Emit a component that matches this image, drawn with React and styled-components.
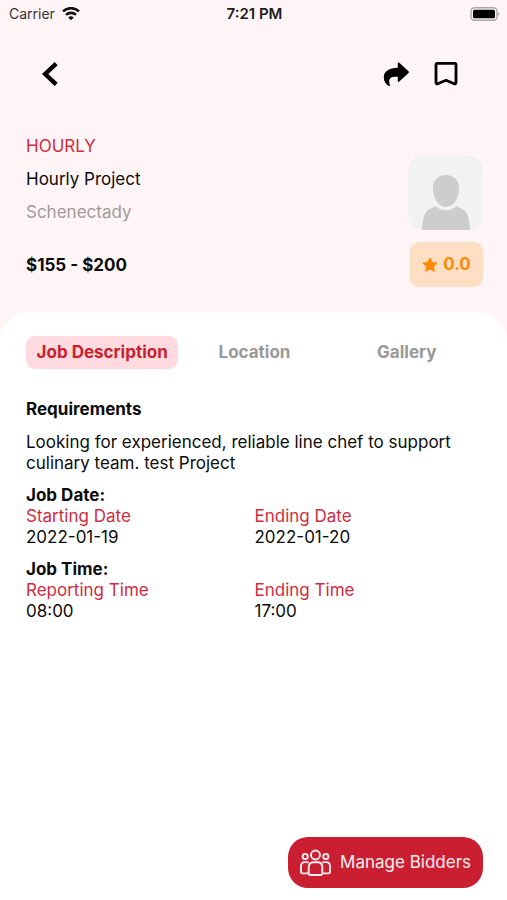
import React, { useState } from 'react';
import styled, { createGlobalStyle } from 'styled-components';

const GlobalStyle = createGlobalStyle`
  * {
    box-sizing: border-box;
  }

  body {
    margin: 0;
    background: #fff;
    color: #0c0c0c;
    font-family: Inter, 'Liberation Sans', sans-serif;
    font-size: 17px;
    line-height: 21px;
  }

  button {
    border: 0;
    padding: 0;
    background: none;
    color: inherit;
    font: inherit;
    cursor: pointer;
  }
`;

const Screen = styled.div`
  display: flex;
  flex-direction: column;
  min-height: 100vh;
  background: #fff5f6;
`;

const StatusBar = styled.div`
  display: grid;
  grid-template-columns: 1fr auto 1fr;
  align-items: center;
  height: 27px;
  padding: 0 7px 0 9px;
  font-size: 14px;
`;

const Carrier = styled.div`
  display: flex;
  align-items: center;
  gap: 7px;
  color: #333;
`;

const Clock = styled.div`
  color: #1c1c1c;
  font-size: 15px;
  font-weight: 600;
`;

const Battery = styled.svg`
  justify-self: end;
`;

const NavBar = styled.nav`
  display: flex;
  align-items: center;
  justify-content: space-between;
  padding: 33px 48px 0 40px;
`;

const NavActions = styled.div`
  display: flex;
  gap: 23px;
`;

const IconButton = styled.button`
  display: flex;
  color: #000;
`;

const Header = styled.header`
  display: flex;
  justify-content: space-between;
  padding: 48px 24px 25px 26px;
`;

const Summary = styled.div`
  display: flex;
  flex-direction: column;
  gap: 12px;
`;

const Line = styled.div`
  color: ${props => props.$color || 'inherit'};
`;

const Price = styled.div`
  margin-top: 20px;
  font-weight: 700;
`;

const Profile = styled.div`
  display: flex;
  flex-direction: column;
  align-items: flex-end;
  gap: 12px;
  padding-top: 20px;
`;

const Avatar = styled.svg`
  display: block;
  border-radius: 14px;
  background: #f2f2f2;
`;

const Rating = styled.div`
  display: flex;
  align-items: center;
  justify-content: center;
  gap: 5px;
  width: 73px;
  height: 45px;
  border-radius: 9px;
  background: #ffdfc4;
  color: #ff8a05;
  font-weight: 700;
`;

const Sheet = styled.main`
  display: flex;
  flex: 1;
  flex-direction: column;
  padding: 24px 24px 12px 26px;
  border-radius: 30px 30px 0 0;
  background: #fff;
`;

const Tabs = styled.div`
  display: grid;
  grid-template-columns: repeat(3, 1fr);
  margin-bottom: 30px;
`;

const Tab = styled.button`
  height: 33px;
  border-radius: 9px;
  font-weight: 700;
  white-space: nowrap;
  ${props => props.$active
    ? 'background: #ffdadf; color: #c91f30;'
    : 'color: #999;'}
`;

const Section = styled.section`
  margin-bottom: 11px;
`;

const Heading = styled.h2`
  margin: 0;
  font-size: 17px;
  font-weight: 700;
`;

const Description = styled.p`
  margin: 12px 0 0;
`;

const Fields = styled.dl`
  display: grid;
  grid-template-columns: 1fr 1fr;
  margin: 0;
`;

const Label = styled.dt`
  color: #d02c40;
`;

const Value = styled.dd`
  margin: 0;
`;

const BiddersButton = styled.button`
  display: flex;
  align-items: center;
  align-self: flex-end;
  gap: 9px;
  height: 51px;
  margin-top: auto;
  padding: 0 12px;
  border-radius: 20px;
  background: #c91f30;
  color: #ffeef0;
`;

const BackIcon = () => (
  <svg width="20" height="28" viewBox="0 0 20 28" fill="none" stroke="currentColor" strokeWidth="4.4">
    <path d="M16.2 3.6 5.2 14l11 10.4" />
  </svg>
);

const ShareIcon = () => (
  <svg width="27" height="28" viewBox="0 0 27 28" fill="currentColor">
    <path d="M14.8 3.4c0-1 .8-1.300 1.500-.6l9.200 8.500c.6.6.6 1.200 0 1.800l-9.200 8.500c-.7.7-1.500.4-1.500-.6v-4.200c-5.400-.6-8.600.6-8.600 4.400 0 1.600.3 2.900.7 3.900.3.800-.3 1.300-1.100.8C2.900 24.200.8 21.200.8 17.400.8 11.400 6 8 14.800 7.800z" />
  </svg>
);

const BookmarkIcon = () => (
  <svg width="26" height="28" viewBox="0 0 26 28" fill="none" stroke="currentColor" strokeWidth="2.800" strokeLinejoin="round">
    <path d="M4.400 3.400h17.200c.8 0 1.400.6 1.400 1.400v17.800c0 1-.9 1.500-1.800 1.100L13 20.200l-8.200 3.500c-.9.4-1.800-.1-1.800-1.100V4.800c0-.8.6-1.400 1.400-1.400z" />
  </svg>
);

const WifiIcon = () => (
  <svg width="18" height="14" viewBox="0 0 18 14" fill="none" stroke="#111" strokeWidth="2.600">
    <path d="M1 4.400a11.500 11.500 0 0 1 16 0" />
    <path d="M4 7.900a7.200 7.200 0 0 1 10 0" />
    <path d="M9 13.300 6.200 10.500a4 4 0 0 1 5.600 0z" fill="#111" stroke="none" />
  </svg>
);

const StarIcon = () => (
  <svg width="16" height="16" viewBox="0 0 16 16" fill="currentColor" stroke="currentColor" strokeWidth="1.600" strokeLinejoin="round">
    <path d="m8 1.500 1.900 4.200 4.600.5-3.400 3.100.9 4.600L8 11.600l-4 2.300.9-4.600L1.500 6.200l4.600-.5z" />
  </svg>
);

const BiddersIcon = () => (
  <svg width="31" height="28" viewBox="0 0 31 28" fill="none" stroke="currentColor" strokeWidth="1.900" strokeLinejoin="round">
    <circle cx="15.500" cy="6" r="4.500" />
    <circle cx="5.200" cy="7.500" r="2.600" />
    <circle cx="25.800" cy="7.500" r="2.600" />
    <path d="M8.700 24.600v-6.400c0-3.200 2-4.900 4.800-4.900h4c2.800 0 4.800 1.700 4.800 4.900v6.400c0 .9-.6 1.400-1.500 1.400H10.200c-.9 0-1.500-.5-1.500-1.400z" />
    <path d="M8.700 13.600c-.7-.4-1.400-.5-2.200-.5H5c-2.500 0-4 1.500-4 4v6c0 .8.5 1.300 1.300 1.300h6.400" />
    <path d="M22.300 13.600c.7-.4 1.400-.5 2.200-.5H26c2.500 0 4 1.500 4 4v6c0 .8-.5 1.300-1.300 1.300h-6.400" />
  </svg>
);

const tabs = ['Job Description', 'Location', 'Gallery'];

const schedule = [
  {
    title: 'Job Date:',
    fields: [['Starting Date', '2022-01-19'], ['Ending Date', '2022-01-20']],
  },
  {
    title: 'Job Time:',
    fields: [['Reporting Time', '08:00'], ['Ending Time', '17:00']],
  },
];

const App = () => {
  const [activeTab, setActiveTab] = useState(tabs[0]);

  return (
    <Screen>
      <GlobalStyle />
      <StatusBar>
        <Carrier>
          Carrier
          <WifiIcon />
        </Carrier>
        <Clock>7:21 PM</Clock>
        <Battery width="30" height="14" viewBox="0 0 30 14">
          <rect x="1" y=".8" width="26" height="12.400" rx="3.500" fill="#fff5f6" stroke="#aaa5a6" strokeWidth="1.400" />
          <rect x="3" y="2.800" width="22" height="8.400" rx="1.500" fill="#000" />
          <path d="M28.200 5v4c1.600-.6 1.600-3.400 0-4z" fill="#aaa5a6" />
        </Battery>
      </StatusBar>

      <NavBar>
        <IconButton aria-label="Back"><BackIcon /></IconButton>
        <NavActions>
          <IconButton aria-label="Share"><ShareIcon /></IconButton>
          <IconButton aria-label="Save"><BookmarkIcon /></IconButton>
        </NavActions>
      </NavBar>

      <Header>
        <Summary>
          <Line $color="#d02c40">HOURLY</Line>
          <Line>Hourly Project</Line>
          <Line $color="#a09a9b">Schenectady</Line>
          <Price>$155 - $200</Price>
        </Summary>
        <Profile>
          <Avatar width="75" height="74" viewBox="0 0 75 74" fill="#cdcdcd">
            <path d="M38 19c8.500 0 13.200 5.500 13 13.500-.2 10-5.500 18.500-13 18.500s-12.800-8.500-13-18.500C24.800 24.500 29.500 19 38 19z" />
            <path d="M14 74c.3-8 1.500-15 4.500-18.500 2-2.300 5.500-3.700 9-5.300 3 2.600 6.500 4.100 10.500 4.100s7.500-1.500 10.500-4.100c3.500 1.600 7 3 9 5.300C60.500 59 61.700 66 62 74z" />
          </Avatar>
          <Rating>
            <StarIcon />
            0.0
          </Rating>
        </Profile>
      </Header>

      <Sheet>
        <Tabs role="tablist">
          {tabs.map(tab => (
            <Tab
              key={tab}
              role="tab"
              aria-selected={tab === activeTab}
              $active={tab === activeTab}
              onClick={() => setActiveTab(tab)}
            >
              {tab}
            </Tab>
          ))}
        </Tabs>

        <Section>
          <Heading>Requirements</Heading>
          <Description>
            Looking for experienced, reliable line chef to support culinary team. test Project
          </Description>
        </Section>

        {schedule.map(({ title, fields }) => (
          <Section key={title}>
            <Heading>{title}</Heading>
            <Fields>
              {fields.map(([label, value]) => (
                <div key={label}>
                  <Label>{label}</Label>
                  <Value>{value}</Value>
                </div>
              ))}
            </Fields>
          </Section>
        ))}

        <BiddersButton>
          <BiddersIcon />
          Manage Bidders
        </BiddersButton>
      </Sheet>
    </Screen>
  );
};

export default App;
